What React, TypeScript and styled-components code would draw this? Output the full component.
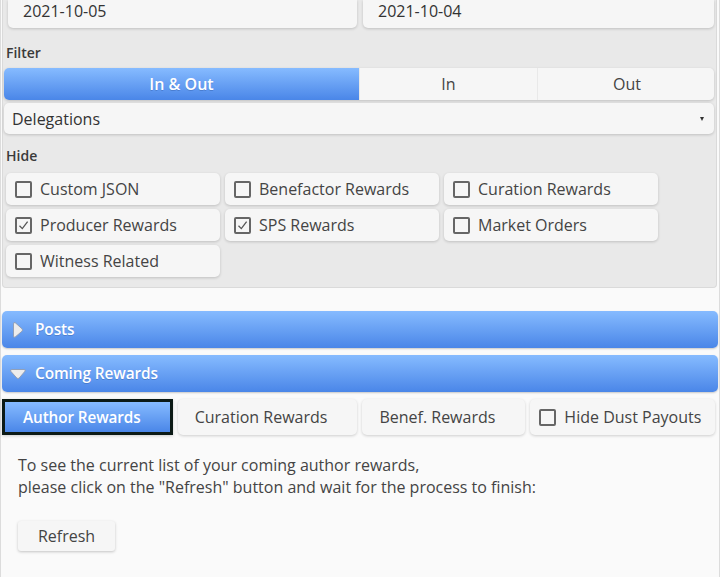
import React from "react";
import styled, { createGlobalStyle, css } from "styled-components";

const Global = createGlobalStyle`
  html, body {
    margin: 0;
    padding: 0;
    background: #fafafa;
  }
  body {
    font-family: "Open Sans", "Noto Sans", sans-serif;
    color: #333;
    font-size: 16px;
    overflow: hidden;
  }
`;

const blue = css`
  background: linear-gradient(#86bbff, #4a86e8);
  color: #fff;
  text-shadow: 0 1px 0 rgba(40, 80, 150, 0.35);
`;

const Page = styled.div`
  width: 720px;
  height: 577px;
  box-sizing: border-box;
  border-left: 1px solid #dcdcdc;
  border-right: 1px solid #dcdcdc;
  padding: 0 1px;
`;

const FilterPanel = styled.section`
  background: #e9e9e9;
  border: 1px solid #dadada;
  border-top: none;
  border-radius: 0 0 4px 4px;
  padding: 0 2px 10px 1px;
  margin-right: 1px;
`;

const DateRow = styled.div`
  display: grid;
  grid-template-columns: 349px 351px;
  gap: 6px;
  padding-left: 4px;
`;

const DateField = styled.div`
  background: #f6f6f6;
  border-radius: 0 0 5px 5px;
  box-shadow: 0 1px 3px rgba(0, 0, 0, 0.18);
  height: 28px;
  box-sizing: border-box;
  padding: 0 15px 6px;
  line-height: 22px;
  color: #333;
`;

const Label = styled.div`
  font-size: 14px;
  font-weight: 600;
  color: #3a3a3a;
  padding-left: 2px;
  line-height: 20px;
`;

const FilterLabel = styled(Label)`
  margin-top: 15px;
  margin-bottom: 5px;
`;

const HideLabel = styled(Label)`
  margin-top: 12px;
  margin-bottom: 7px;
`;

const Segmented = styled.div`
  display: grid;
  grid-template-columns: 355px 177px 178px;
  gap: 1px;
  height: 32px;
  border-radius: 5px;
  box-shadow: 0 1px 3px rgba(0, 0, 0, 0.18);
  overflow: hidden;
`;

const Segment = styled.div<{ $active?: boolean }>`
  display: flex;
  align-items: center;
  justify-content: center;
  background: #f6f6f6;
  color: #444;
  font-size: 16px;
  ${(p) => p.$active && blue}
  ${(p) => p.$active && css`font-weight: 600;`}
`;

const Select = styled.div`
  margin-top: 3px;
  height: 31px;
  background: #f6f6f6;
  border-radius: 5px;
  box-shadow: 0 1px 3px rgba(0, 0, 0, 0.18);
  display: flex;
  align-items: center;
  justify-content: space-between;
  padding: 0 10px 0 8px;
  color: #333;
`;

const Caret = styled.span`
  width: 0;
  height: 0;
  border-left: 2.5px solid transparent;
  border-right: 2.5px solid transparent;
  border-top: 4px solid #333;
`;

const CheckGrid = styled.div`
  display: grid;
  grid-template-columns: repeat(3, 214px);
  column-gap: 5px;
  row-gap: 4px;
  padding-left: 2px;
`;

const CheckItem = styled.div`
  height: 32px;
  background: #f6f6f6;
  border-radius: 5px;
  box-shadow: 0 1px 3px rgba(0, 0, 0, 0.18);
  display: flex;
  align-items: center;
  padding-left: 9px;
  gap: 8px;
  color: #444;
  white-space: nowrap;
`;

const Box = styled.span`
  width: 17px;
  height: 17px;
  box-sizing: border-box;
  border: 2px solid #666;
  border-radius: 2px;
  display: inline-flex;
  align-items: center;
  justify-content: center;
  flex: none;
`;

const CheckBox = ({ checked }: { checked?: boolean }) => (
  <Box>
    {checked && (
      <svg width="11" height="11" viewBox="0 0 11 11">
        <path d="M1.5 5.8 L4.3 8.6 L9.6 1.6" fill="none" stroke="#555" strokeWidth="1.3" />
      </svg>
    )}
  </Box>
);

const Collapsibles = styled.div`
  margin-top: 23px;
  display: flex;
  flex-direction: column;
  gap: 7px;
`;

const Header = styled.div`
  ${blue}
  height: 37px;
  border-radius: 5px;
  display: flex;
  align-items: center;
  padding-left: 7px;
  gap: 8px;
  font-weight: 600;
  font-size: 15.4px;
  letter-spacing: -0.1px;
  box-shadow: 0 1px 2px rgba(0, 0, 0, 0.2);
`;

const Icon = styled.span`
  width: 18px;
  height: 18px;
  display: inline-flex;
  align-items: center;
  justify-content: center;
`;

const Tabs = styled.div`
  margin-top: 7px;
  display: flex;
  gap: 5px;
  height: 36px;
`;

const Tab = styled.div<{ $active?: boolean }>`
  display: flex;
  align-items: center;
  box-sizing: border-box;
  background: #f6f6f6;
  color: #444;
  border-radius: 5px;
  padding: 0 30px 0 17px;
  box-shadow: 0 1px 3px rgba(0, 0, 0, 0.18);
  white-space: nowrap;
  ${(p) =>
    p.$active &&
    css`
      ${blue}
      font-weight: 600;
      font-size: 15.3px;
      letter-spacing: -0.1px;
      border-radius: 0;
      border: 3px solid #0c1a16;
      padding: 0 29px 0 18px;
      text-shadow: none;
    `}
`;

const TabCheck = styled(Tab)`
  padding: 0 14px 0 9px;
  gap: 8px;
`;

const Body = styled.div`
  padding: 19px 16px 0;
`;

const Para = styled.p`
  margin: 0;
  line-height: 22px;
  color: #444;
`;

const Button = styled.div`
  margin-top: 23px;
  width: 97px;
  height: 30px;
  box-sizing: border-box;
  background: #f6f6f6;
  border-radius: 3px;
  box-shadow: 0 1px 3px rgba(0, 0, 0, 0.22);
  display: flex;
  align-items: center;
  justify-content: center;
  color: #444;
`;

const hideOptions: { label: string; checked?: boolean }[] = [
  { label: "Custom JSON" },
  { label: "Benefactor Rewards" },
  { label: "Curation Rewards" },
  { label: "Producer Rewards", checked: true },
  { label: "SPS Rewards", checked: true },
  { label: "Market Orders" },
  { label: "Witness Related" },
];

export default function App() {
  return (
    <>
      <Global />
      <Page>
        <FilterPanel>
          <DateRow>
            <DateField>2021-10-05</DateField>
            <DateField>2021-10-04</DateField>
          </DateRow>
          <FilterLabel>Filter</FilterLabel>
          <Segmented>
            <Segment $active>In &amp; Out</Segment>
            <Segment>In</Segment>
            <Segment>Out</Segment>
          </Segmented>
          <Select>
            <span>Delegations</span>
            <Caret />
          </Select>
          <HideLabel>Hide</HideLabel>
          <CheckGrid>
            {hideOptions.map((o) => (
              <CheckItem key={o.label}>
                <CheckBox checked={o.checked} />
                {o.label}
              </CheckItem>
            ))}
          </CheckGrid>
        </FilterPanel>

        <Collapsibles>
          <Header>
            <Icon>
              <svg width="12" height="18" viewBox="0 0 12 18">
                <path d="M3 1.5 Q1.5 1.2 1.5 3 L1.5 15 Q1.5 16.8 3 16.2 L10 10.2 Q11.2 9 10 7.8 Z" fill="#ececec" stroke="#8e9bb0" strokeWidth="0.9" />
              </svg>
            </Icon>
            Posts
          </Header>
          <Header>
            <Icon>
              <svg width="18" height="12" viewBox="0 0 18 12">
                <path d="M1.5 3 Q1.2 1.5 3 1.5 L15 1.5 Q16.8 1.5 16.2 3 L10.2 10 Q9 11.2 7.8 10 Z" fill="#ececec" stroke="#8e9bb0" strokeWidth="0.9" />
              </svg>
            </Icon>
            Coming Rewards
          </Header>
        </Collapsibles>

        <Tabs>
          <Tab $active>Author Rewards</Tab>
          <Tab>Curation Rewards</Tab>
          <Tab>Benef. Rewards</Tab>
          <TabCheck>
            <CheckBox />
            Hide Dust Payouts
          </TabCheck>
        </Tabs>

        <Body>
          <Para>
            To see the current list of your coming author rewards,
            <br />
            please click on the "Refresh" button and wait for the process to finish:
          </Para>
          <Button>Refresh</Button>
        </Body>
      </Page>
    </>
  );
}
